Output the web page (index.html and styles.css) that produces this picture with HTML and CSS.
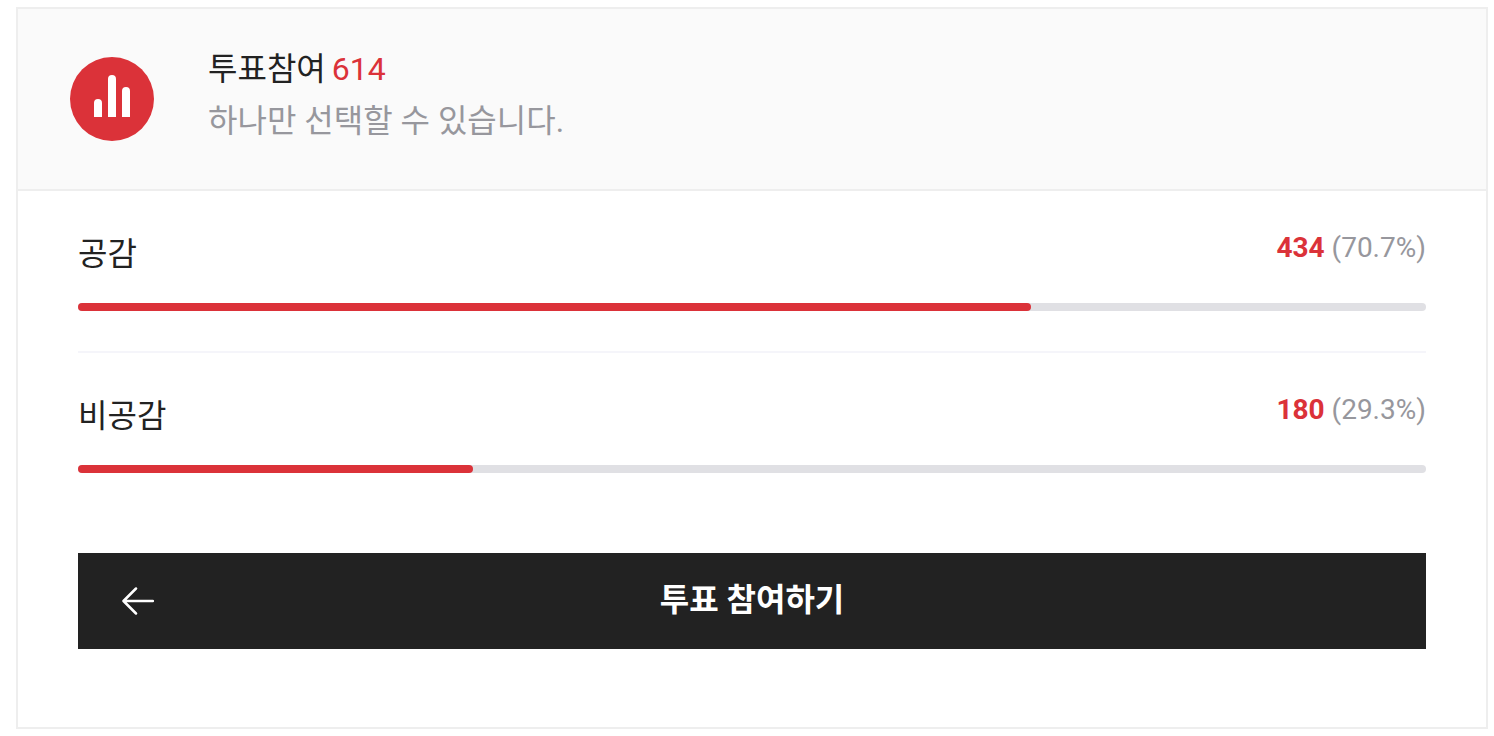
FILE: index.html
```html
<!DOCTYPE html>
<html lang="ko">
<head>
    <meta charset="UTF-8">
    <meta name="viewport" content="width=device-width, initial-scale=1.0">
    <title>투표</title>
    <link rel="stylesheet" href="styles.css">
</head>
<body>
    <section class="poll">
        <!-- Poll header -->
        <header class="poll-header">
            <svg class="poll-icon" viewBox="0 0 84 84" aria-hidden="true">
                <circle cx="42" cy="42" r="42" fill="#db3239"/>
                <path fill="#fff" d="M24 60V46a4 4 0 0 1 8 0v14zM38 60V22a4 4 0 0 1 8 0v38zM52 60V34a4 4 0 0 1 8 0v26z"/>
            </svg>
            <div class="poll-info">
                <h2 class="poll-title">투표참여 <span class="poll-total">614</span></h2>
                <p class="poll-desc">하나만 선택할 수 있습니다.</p>
            </div>
        </header>

        <div class="poll-body">
            <!-- Results -->
            <ul class="poll-list">
                <li class="poll-item">
                    <div class="poll-row">
                        <span class="poll-label" id="label1">공감</span>
                        <span class="poll-count"><strong>434</strong> (70.7%)</span>
                    </div>
                    <div class="poll-track" role="meter" aria-labelledby="label1" aria-valuemin="0" aria-valuemax="100" aria-valuenow="70.7">
                        <div class="poll-bar" style="width: 70.7%"></div>
                    </div>
                </li>
                <li class="poll-item">
                    <div class="poll-row">
                        <span class="poll-label" id="label2">비공감</span>
                        <span class="poll-count"><strong>180</strong> (29.3%)</span>
                    </div>
                    <div class="poll-track" role="meter" aria-labelledby="label2" aria-valuemin="0" aria-valuemax="100" aria-valuenow="29.3">
                        <div class="poll-bar" style="width: 29.3%"></div>
                    </div>
                </li>
            </ul>

            <button type="button" class="poll-btn">
                <svg class="arrow" viewBox="0 0 32 28" aria-hidden="true">
                    <path d="M31 14H2M14 1.5L1.5 14 14 26.5" fill="none" stroke="#fff" stroke-width="2.5" stroke-linecap="round" stroke-linejoin="round"/>
                </svg>
                <span>투표 참여하기</span>
            </button>
        </div>
    </section>
</body>
</html>
```

FILE: styles.css
```css
* {
    margin: 0;
    padding: 0;
    box-sizing: border-box;
}

body {
    padding: 7px 6px 7px 16px;
    font-family: Roboto, 'Noto Sans CJK KR', sans-serif;
    font-size: 32px;
    line-height: 52px;
    color: #222;
    background: #fff;
}

.poll {
    border: 2px solid #eee;
}

/* Header */
.poll-header {
    display: flex;
    align-items: flex-start;
    gap: 54px;
    padding: 34px 52px 42px;
    background: #fafafa;
    border-bottom: 2px solid #eee;
}

.poll-icon {
    flex: none;
    width: 84px;
    height: 84px;
    margin-top: 14px;
}

.poll-title {
    display: flex;
    gap: 6px;
    font-size: 32px;
    font-weight: 400;
}

.poll-total {
    color: #db3239;
}

.poll-desc {
    color: #97979d;
}

/* Results */
.poll-body {
    padding: 0 60px 78px;
}

.poll-list {
    list-style: none;
}

.poll-item {
    padding: 37px 0 40px;
}

.poll-item + .poll-item {
    border-top: 2px solid #f5f5fa;
}

.poll-row {
    display: flex;
    align-items: flex-start;
    justify-content: space-between;
    padding-bottom: 23px;
}

.poll-count {
    font-size: 28px;
    line-height: 40px;
    color: #97979d;
}

.poll-count strong {
    font-weight: 700;
    color: #db3239;
}

.poll-track {
    height: 8px;
    background: #e0e0e4;
    border-radius: 4px;
}

.poll-bar {
    height: 100%;
    background: #db3239;
    border-radius: 4px;
}

/* Button */
.poll-btn {
    position: relative;
    display: block;
    width: 100%;
    height: 96px;
    margin-top: 40px;
    padding-bottom: 8px;
    font-family: inherit;
    font-size: 32px;
    font-weight: 700;
    color: #fff;
    background: #222;
    border: none;
    cursor: pointer;
}

.arrow {
    position: absolute;
    top: 34px;
    left: 44px;
    width: 32px;
    height: 28px;
}
```
